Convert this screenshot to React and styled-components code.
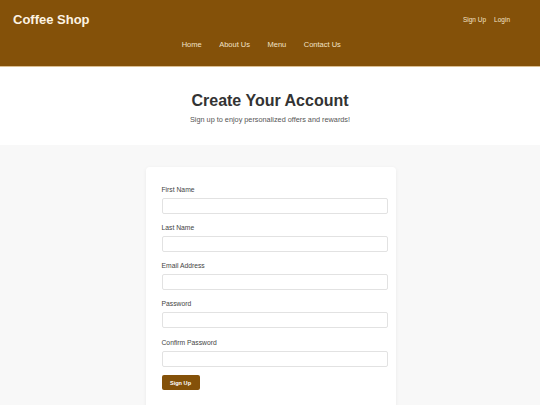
import React from 'react';
import styled, { createGlobalStyle } from 'styled-components';

const GlobalStyle = createGlobalStyle`
  html, body {
    margin: 0;
    padding: 0;
    background: #f8f8f8;
    font-family: "Liberation Sans", Arial, sans-serif;
  }
`;

const fields = [
  { id: 'firstName', label: 'First Name', type: 'text' },
  { id: 'lastName', label: 'Last Name', type: 'text' },
  { id: 'email', label: 'Email Address', type: 'email' },
  { id: 'password', label: 'Password', type: 'password' },
  { id: 'confirmPassword', label: 'Confirm Password', type: 'password' },
];

const App = () => {
  return (
    <>
      <GlobalStyle />
      <Header>
        <TopRow>
          <Logo>Coffee Shop</Logo>
          <AuthLinks>
            <AuthLink href="#">Sign Up</AuthLink>
            <AuthLink href="#">Login</AuthLink>
          </AuthLinks>
        </TopRow>
        <Nav>
          <NavLink href="#">Home</NavLink>
          <NavLink href="#">About Us</NavLink>
          <NavLink href="#">Menu</NavLink>
          <NavLink href="#">Contact Us</NavLink>
        </Nav>
      </Header>

      <Hero>
        <Title>Create Your Account</Title>
        <Subtitle>Sign up to enjoy personalized offers and rewards!</Subtitle>
      </Hero>

      <FormSection>
        <Card onSubmit={(e) => e.preventDefault()}>
          {fields.map((f) => (
            <Field key={f.id}>
              <Label htmlFor={f.id}>{f.label}</Label>
              <Input id={f.id} type={f.type} />
            </Field>
          ))}
          <Button type="submit">Sign Up</Button>
        </Card>
      </FormSection>
    </>
  );
};

const Header = styled.header`
  background: #845109;
  border-bottom: 1px solid #dcbf92;
  height: 67px;
  box-sizing: border-box;
  padding: 12px 13px 0;
`;

const TopRow = styled.div`
  display: flex;
  justify-content: space-between;
  align-items: center;
  height: 15px;
`;

const Logo = styled.h1`
  margin: 0;
  font-size: 13px;
  line-height: 15px;
  font-weight: bold;
  color: #fdf3e3;
`;

const AuthLinks = styled.nav`
  display: flex;
  gap: 8px;
  margin-right: 17px;
  margin-top: -1px;
`;

const AuthLink = styled.a`
  color: #f3e2c7;
  font-size: 6.5px;
  text-decoration: none;
`;

const Nav = styled.nav`
  display: flex;
  justify-content: center;
  margin-top: 13px;
  line-height: 9px;
`;

const NavLink = styled.a`
  color: #f3e2c7;
  font-size: 7.5px;
  text-decoration: none;
  margin-right: 17.5px;
`;

const Hero = styled.section`
  background: #fff;
  height: 78px;
  box-sizing: border-box;
  padding-top: 25px;
  text-align: center;
`;

const Title = styled.h2`
  margin: 0;
  font-size: 16px;
  line-height: 18px;
  font-weight: bold;
  color: #333;
`;

const Subtitle = styled.p`
  margin: 6px 0 0;
  font-size: 7.3px;
  line-height: 8px;
  color: #555;
`;

const FormSection = styled.main`
  padding-top: 22px;
  display: flex;
  justify-content: center;
`;

const Card = styled.form`
  width: 250px;
  box-sizing: border-box;
  margin-left: 1px;
  background: #fff;
  border-radius: 4px;
  box-shadow: 0 1px 4px rgba(0, 0, 0, 0.06);
  padding: 18.5px 17px 20px 16px;
`;

const Field = styled.div`
  display: flex;
  flex-direction: column;
  margin-bottom: 10.3px;
`;

const Label = styled.label`
  font-size: 6.75px;
  line-height: 8px;
  color: #444;
  margin-bottom: 4px;
`;

const Input = styled.input`
  height: 16px;
  box-sizing: border-box;
  width: calc(100% + 9px);
  border: 1px solid #e2e2e2;
  border-radius: 2px;
  padding: 0 4px;
  font-size: 7px;
  background: #fff;
`;

const Button = styled.button`
  display: block;
  margin-top: -1.6px;
  width: 38px;
  height: 15px;
  padding: 0;
  border: none;
  border-radius: 2px;
  background: #845109;
  color: #fff;
  font-family: "Liberation Sans", Arial, sans-serif;
  font-size: 5.6px;
  font-weight: bold;
  cursor: pointer;
`;

export default App;
